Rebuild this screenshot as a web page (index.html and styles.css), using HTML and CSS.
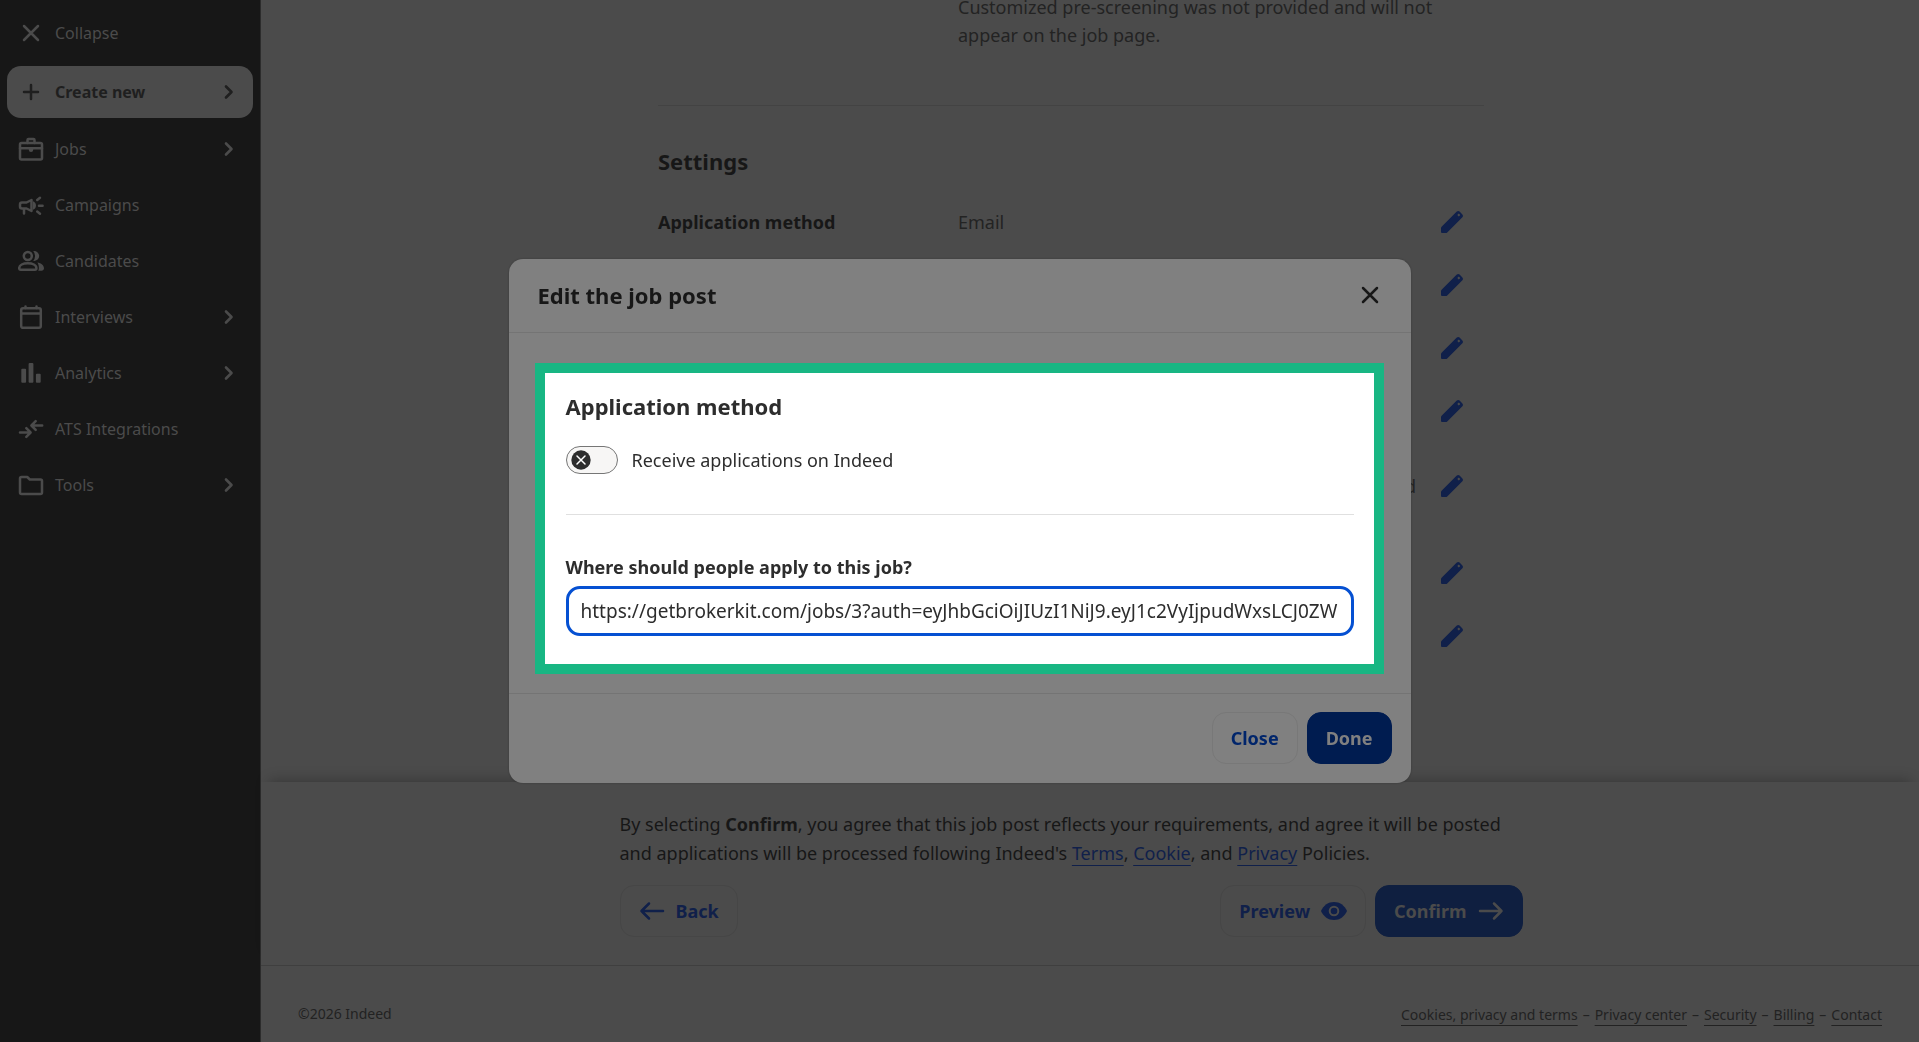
FILE: index.html
```html
<!DOCTYPE html>
<html lang="en">
<head>
    <meta charset="UTF-8">
    <meta name="viewport" content="width=device-width, initial-scale=1.0">
    <title>Edit the job post</title>
    <link rel="stylesheet" href="styles.css">
</head>
<body>
    <!-- Shared icons -->
    <svg width="0" height="0" class="sprite" aria-hidden="true">
        <symbol id="icon-chevron" viewBox="0 0 16 16">
            <path d="M5 2.5 10.5 8 5 13.5" fill="none" stroke="currentColor" stroke-width="2.6" stroke-linecap="round" stroke-linejoin="round"/>
        </symbol>
        <symbol id="icon-pencil" viewBox="0 0 24 24">
            <path fill="currentColor" fill-rule="evenodd" d="M1 18.2V22a1 1 0 0 0 1 1h3.8a2 2 0 0 0 1.400-.6L22.4 7.200a2 2 0 0 0 0-2.8L19.6 1.6a2 2 0 0 0-2.8 0L1.600 16.800A2 2 0 0 0 1 18.200zM18.8 3.6l1.500 1.500-1.500 1.500-1.500-1.500z"/>
        </symbol>
    </svg>

    <nav class="sidebar">
        <button class="nav-item" type="button">
            <svg class="nav-icon" viewBox="0 0 26 26"><path d="M6 6l14 14M20 6 6 20"/></svg>
            Collapse
        </button>
        <button class="nav-item create-new" type="button">
            <svg class="nav-icon" viewBox="0 0 26 26"><path d="M13 6v14M6 13h14"/></svg>
            Create new
            <svg class="chevron"><use href="#icon-chevron"/></svg>
        </button>
        <ul class="nav-list">
            <li>
                <a class="nav-item" href="#">
                    <svg class="nav-icon" viewBox="0 0 26 26">
                        <rect x="2" y="7" width="22" height="16.5" rx="1.5"/>
                        <path d="M9.5 7V4a1 1 0 0 1 1-1h5a1 1 0 0 1 1 1v3M2 12.2h22"/>
                        <path class="solid" d="M10.8 12h4.4v1.8a2.2 2.2 0 0 1-4.4 0z"/>
                    </svg>
                    Jobs
                    <svg class="chevron"><use href="#icon-chevron"/></svg>
                </a>
            </li>
            <li>
                <a class="nav-item" href="#">
                    <svg class="nav-icon" viewBox="0 0 26 26">
                        <path d="M8.500 10.500H4a2 2 0 0 0-2 2v2a2 2 0 0 0 2 2h4.500l5 2.500V8zM6 17v4.500"/>
                        <path class="solid" d="M15 9.2a4.6 4.6 0 0 1 0 8.6z"/>
                        <path d="M19.2 8 22 5.8M21 13.8h3.600M19.2 19.6l2.8 2.200"/>
                    </svg>
                    Campaigns
                </a>
            </li>
            <li>
                <a class="nav-item" href="#">
                    <svg class="nav-icon" viewBox="0 0 26 26">
                        <circle cx="9.8" cy="8" r="4"/>
                        <path d="M1.200 20.2c0-3.2 4-5 8.600-5s8.600 1.800 8.600 5c0 .9-.6 1.500-1.500 1.500H2.700C1.800 21.700 1.200 21.100 1.200 20.200z"/>
                        <path class="solid" d="M15.200 3.100a5 5 0 1 1 0 9.800 7.400 7.400 0 0 0 0-9.800zM19.400 14.500c3.800.8 6.600 2.700 6.600 5.700 0 1.500-1 2.500-2.500 2.500h-3.300c.5-.7.700-1.500.700-2.500 0-2.200-.5-4.200-1.500-5.700z"/>
                    </svg>
                    Candidates
                </a>
            </li>
            <li>
                <a class="nav-item" href="#">
                    <svg class="nav-icon" viewBox="0 0 26 26">
                        <rect x="3.200" y="4.200" width="19.600" height="19.600" rx="1.800"/>
                        <path d="M3.200 9.500h19.600M7.500 4V2.500M18.500 4V2.500"/>
                    </svg>
                    Interviews
                    <svg class="chevron"><use href="#icon-chevron"/></svg>
                </a>
            </li>
            <li>
                <a class="nav-item" href="#">
                    <svg class="nav-icon" viewBox="0 0 26 26">
                        <rect class="solid" x="3.300" y="8.700" width="4.800" height="14" rx="1"/>
                        <rect class="solid" x="10.600" y="3" width="4.800" height="19.700" rx="1"/>
                        <rect class="solid" x="17.900" y="13.700" width="4.800" height="9" rx="1"/>
                    </svg>
                    Analytics
                    <svg class="chevron"><use href="#icon-chevron"/></svg>
                </a>
            </li>
            <li>
                <a class="nav-item" href="#">
                    <svg class="nav-icon" viewBox="0 0 26 26">
                        <path d="M2 16.500h10.500M8.300 12.200l4.300 4.300-4.300 4.300M24.200 9.500H13.500M17.700 5.200 13.400 9.500l4.300 4.300"/>
                    </svg>
                    ATS Integrations
                </a>
            </li>
            <li>
                <a class="nav-item" href="#">
                    <svg class="nav-icon" viewBox="0 0 26 26">
                        <path d="M2 6.500A1.500 1.500 0 0 1 3.500 5h5.700l2.600 2.500h10.700A1.500 1.500 0 0 1 24 9v11.500a1.500 1.500 0 0 1-1.500 1.500h-19A1.500 1.500 0 0 1 2 20.500z"/>
                    </svg>
                    Tools
                    <svg class="chevron"><use href="#icon-chevron"/></svg>
                </a>
            </li>
        </ul>
    </nav>

    <main class="page">
        <section class="review">
            <div class="review-column">
                <div class="review-row prescreen">
                    <p class="row-value">Customized pre-screening was not provided and will not appear on the job page.</p>
                </div>
                <hr class="divider">
                <h2 class="review-title">Settings</h2>
                <div class="review-row">
                    <span class="row-label">Application method</span>
                    <span class="row-value">Email</span>
                    <button class="edit" type="button" aria-label="Edit"><svg><use href="#icon-pencil"/></svg></button>
                </div>
                <div class="review-row">
                    <button class="edit" type="button" aria-label="Edit"><svg><use href="#icon-pencil"/></svg></button>
                </div>
                <div class="review-row">
                    <button class="edit" type="button" aria-label="Edit"><svg><use href="#icon-pencil"/></svg></button>
                </div>
                <div class="review-row">
                    <button class="edit" type="button" aria-label="Edit"><svg><use href="#icon-pencil"/></svg></button>
                </div>
                <div class="review-row tall">
                    <span class="row-value align-end">d</span>
                    <button class="edit" type="button" aria-label="Edit"><svg><use href="#icon-pencil"/></svg></button>
                </div>
                <div class="review-row">
                    <button class="edit" type="button" aria-label="Edit"><svg><use href="#icon-pencil"/></svg></button>
                </div>
                <div class="review-row">
                    <button class="edit" type="button" aria-label="Edit"><svg><use href="#icon-pencil"/></svg></button>
                </div>
            </div>
        </section>

        <section class="confirm-bar">
            <div class="confirm-column">
                <p class="agreement">By selecting <b>Confirm</b>, you agree that this job post reflects your requirements, and agree it will be posted and applications will be processed following Indeed's <a href="#">Terms</a>, <a href="#">Cookie</a>, and <a href="#">Privacy</a> Policies.</p>
                <div class="actions">
                    <button class="btn back" type="button">
                        <svg class="btn-icon" viewBox="0 0 26 20"><path d="M24 10H2.500M10 2.500 2.500 10l7.500 7.500"/></svg>
                        Back
                    </button>
                    <button class="btn" type="button">
                        Preview
                        <svg class="btn-icon" viewBox="0 0 26 20">
                            <path class="solid" d="M0 10C2.500 4.300 7.300 1 13 1s10.500 3.300 13 9c-2.500 5.700-7.300 9-13 9S2.500 15.700 0 10z"/>
                            <circle class="iris" cx="13" cy="10" r="4.300"/>
                        </svg>
                    </button>
                    <button class="btn btn-confirm" type="button">
                        Confirm
                        <svg class="btn-icon" viewBox="0 0 26 20"><path d="M2 10h21.500M16 2.500l7.500 7.500-7.500 7.500"/></svg>
                    </button>
                </div>
            </div>
        </section>

        <footer class="footer">
            <span>©2026 Indeed</span>
            <div class="footer-links">
                <a href="#">Cookies, privacy and terms</a>
                <span>–</span>
                <a href="#">Privacy center</a>
                <span>–</span>
                <a href="#">Security</a>
                <span>–</span>
                <a href="#">Billing</a>
                <span>–</span>
                <a href="#">Contact</a>
            </div>
        </footer>
    </main>

    <div class="overlay">
        <div class="modal" role="dialog" aria-labelledby="modal-title">
            <header class="modal-header">
                <h1 id="modal-title">Edit the job post</h1>
                <button class="modal-x" type="button" aria-label="Close dialog">
                    <svg viewBox="0 0 20 20"><path d="M3 3l14 14M17 3 3 17"/></svg>
                </button>
            </header>
            <div class="modal-body">
                <div class="highlight">
                    <h2>Application method</h2>
                    <label class="toggle">
                        <span class="toggle-track">
                            <input type="checkbox" role="switch">
                            <svg viewBox="0 0 20 20">
                                <circle cx="10" cy="10" r="9.700"/>
                                <path d="M6 6l8 8M14 6l-8 8"/>
                            </svg>
                        </span>
                        Receive applications on Indeed
                    </label>
                    <hr class="divider-light">
                    <label class="field-label" for="apply-url">Where should people apply to this job?</label>
                    <input class="field" id="apply-url" type="text" value="https://getbrokerkit.com/jobs/3?auth=eyJhbGciOiJIUzI1NiJ9.eyJ1c2VyIjpudWxsLCJ0ZW">
                </div>
            </div>
            <footer class="modal-footer">
                <button class="btn btn-close" type="button">Close</button>
                <button class="btn btn-done" type="button">Done</button>
            </footer>
        </div>
    </div>
</body>
</html>
```
FILE: styles.css
```css
* {
    box-sizing: border-box;
}

body {
    display: flex;
    min-height: 100vh;
    margin: 0;
    font-family: "Noto Sans", sans-serif;
    font-size: 18px;
    line-height: 28px;
    color: #171717;
    background-color: #4b4b4b;
}

h1, h2, p, ul {
    margin: 0;
    padding: 0;
}

button, input {
    font-family: inherit;
    font-size: inherit;
}

button {
    cursor: pointer;
}

.sprite {
    position: absolute;
}

/* Sidebar */
.sidebar {
    flex: 0 0 261px;
    padding: 7px;
    background-color: #171717;
    border-right: 1px solid #2c2c2c;
}

.nav-item {
    display: flex;
    align-items: center;
    gap: 11px;
    width: 100%;
    height: 52px;
    padding: 0 16px 0 11px;
    border: none;
    border-radius: 14px;
    background: none;
    color: #4b4b4b;
    font-size: 16px;
    text-decoration: none;
}

.create-new {
    margin-top: 7px;
    background-color: #4b4b4b;
    color: #1f1f1f;
    font-weight: bold;
}

.nav-list {
    display: flex;
    flex-direction: column;
    gap: 4px;
    margin-top: 5px;
    list-style: none;
}

.nav-icon {
    width: 26px;
    height: 26px;
    fill: none;
    stroke: currentColor;
    stroke-width: 2.5;
    stroke-linecap: round;
    stroke-linejoin: round;
}

.solid {
    fill: currentColor;
    stroke: none;
}

.chevron {
    width: 16px;
    height: 16px;
    margin-left: auto;
}

/* Job post review */
.page {
    flex: 1;
    display: flex;
    flex-direction: column;
    min-width: 0;
}

.review {
    flex: 1;
    padding-right: 38px;
    overflow: hidden;
}

.review-column {
    max-width: 826px;
    margin: -7px auto 0;
}

.review-row {
    display: grid;
    grid-template-columns: 300px 1fr 68px;
    align-items: center;
    min-height: 63px;
}

.review-row.prescreen {
    min-height: 0;
}

.review-row.tall {
    min-height: 87px;
    margin-bottom: 12px;
}

.row-label {
    font-weight: bold;
}

.row-value {
    grid-column: 2;
    color: #232323;
}

.prescreen .row-value {
    grid-column: 2 / 4;
    max-width: 500px;
}

.align-end {
    text-align: right;
}

.edit {
    grid-column: 3;
    width: 24px;
    height: 24px;
    margin-left: 24px;
    padding: 0;
    border: none;
    background: none;
    color: #10204a;
}

.edit svg {
    display: block;
    width: 24px;
    height: 24px;
}

.divider {
    height: 1px;
    margin: 56px 0 0;
    border: none;
    background-color: #434343;
}

.review-title {
    margin: 40px 0 14px;
    font-size: 22px;
    line-height: 30px;
}

/* Confirm bar */
.confirm-bar {
    padding: 28px 38px 28px 0;
    background-color: #4b4b4b;
    border-bottom: 1px solid #3f3f3f;
    box-shadow: 0 -10px 12px -8px rgba(0, 0, 0, 0.25);
}

.confirm-column {
    max-width: 903px;
    margin: 0 auto;
}

.agreement {
    line-height: 29px;
}

.agreement a {
    color: #10204a;
    text-underline-offset: 5px;
    text-decoration-thickness: 1px;
    text-decoration-skip-ink: none;
}

.actions {
    display: flex;
    gap: 9px;
    margin-top: 17px;
}

.btn {
    display: flex;
    align-items: center;
    gap: 11px;
    height: 52px;
    padding: 0 18px;
    border: 1px solid #464646;
    border-radius: 14px;
    background: none;
    color: #10204a;
    font-weight: bold;
}

.back {
    margin-right: auto;
}

.btn-confirm {
    background-color: #0f1f40;
    border-color: #0f1f40;
    color: #4b4b4b;
}

.btn-icon {
    width: 26px;
    height: 20px;
    fill: none;
    stroke: currentColor;
    stroke-width: 2.5;
    stroke-linecap: round;
    stroke-linejoin: round;
}

.btn-icon .iris {
    stroke: #4b4b4b;
    stroke-width: 2;
}

/* Footer */
.footer {
    display: flex;
    justify-content: space-between;
    padding: 34px 37px 13px;
    font-size: 14px;
    color: #222222;
}

.footer-links {
    display: flex;
    gap: 5px;
    padding-top: 1px;
}

.footer a {
    color: #222222;
    text-underline-offset: 5px;
    text-decoration-thickness: 1px;
    text-decoration-skip-ink: none;
}

/* Modal */
.overlay {
    position: fixed;
    inset: 0;
    display: flex;
    align-items: center;
    justify-content: center;
}

.modal {
    width: 100%;
    max-width: 902px;
    background-color: #808080;
    border-radius: 14px;
    box-shadow: 0 0 2px rgba(0, 0, 0, 0.3);
}

.modal-header {
    display: flex;
    align-items: center;
    justify-content: space-between;
    padding: 21px 31px 22px 29px;
    border-bottom: 1px solid #747474;
}

.modal-header h1 {
    font-size: 22px;
    line-height: 30px;
}

.modal-x {
    width: 20px;
    height: 20px;
    padding: 0;
    border: none;
    background: none;
}

.modal-x svg {
    display: block;
    stroke: #171717;
    stroke-width: 2.5;
    stroke-linecap: round;
}

.modal-body {
    padding: 30px 27px 19px 26px;
}

.highlight {
    padding: 18px 20px 28px 21px;
    background-color: #ffffff;
    border: 10px solid #18b683;
    color: #2d2d2d;
}

.highlight h2 {
    font-size: 22px;
    line-height: 30px;
}

.toggle {
    display: flex;
    align-items: center;
    gap: 14px;
    margin-top: 25px;
}

.toggle-track {
    display: grid;
    align-items: center;
}

.toggle-track input {
    grid-area: 1 / 1;
    width: 52px;
    height: 28px;
    margin: 0;
    appearance: none;
    background-color: #f7f6f5;
    border: 1px solid #767676;
    border-radius: 14px;
}

.toggle-track svg {
    grid-area: 1 / 1;
    width: 20px;
    height: 20px;
    margin-left: 5px;
    fill: #2d2d2d;
    pointer-events: none;
}

.toggle-track path {
    stroke: #ffffff;
    stroke-width: 1.5;
    stroke-linecap: round;
}

.divider-light {
    height: 1px;
    margin: 40px 0 38px;
    border: none;
    background-color: #e0e0e0;
}

.field-label {
    display: block;
    font-weight: bold;
}

.field {
    width: 100%;
    height: 50px;
    margin-top: 5px;
    padding: 0 8px 0 12px;
    border: 3px solid #0550d2;
    border-radius: 14px;
    outline: none;
    background-color: #ffffff;
    color: #2d2d2d;
    font-size: 19px;
}

.modal-footer {
    display: flex;
    justify-content: flex-end;
    gap: 9px;
    padding: 18px 19px 19px;
    border-top: 1px solid #747474;
}

.btn-close {
    border-color: #787878;
    color: #00256b;
}

.btn-done {
    background-color: #001c50;
    border-color: #001c50;
    color: #808080;
}
```
